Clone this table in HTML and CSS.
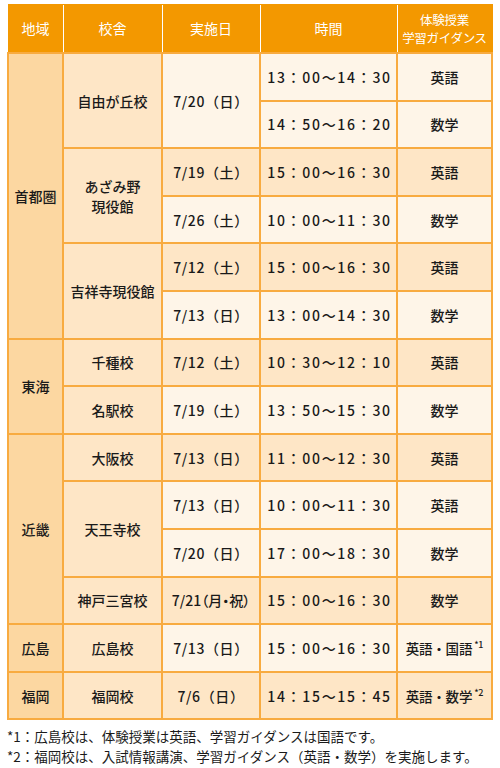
FILE: index.html
```html
<!DOCTYPE html>
<html lang="ja">
<head>
<meta charset="utf-8">
<link rel="stylesheet" href="styles.css">
</head>
<body>
<div class="page">
<table class="schedule">
<colgroup>
<col class="c-region"><col class="c-school"><col class="c-date"><col class="c-time"><col class="c-subj">
</colgroup>
<thead>
<tr><th>地域</th><th>校舎</th><th>実施日</th><th>時間</th><th class="guide"><span class="gl">体験授業</span><span class="gl">学習ガイダンス</span></th></tr>
</thead>
<tbody>
<tr class="light"><td rowspan="6" class="region">首都圏</td><td rowspan="2" class="school">自由が丘校</td><td rowspan="2" class="date">7/20（日）</td><td class="time">13：00～14：30</td><td>英語</td></tr>
<tr class="light"><td class="time">14：50～16：20</td><td>数学</td></tr>
<tr class="mid"><td rowspan="2" class="school">あざみ野<br>現役館</td><td class="date">7/19（土）</td><td class="time">15：00～16：30</td><td>英語</td></tr>
<tr class="light"><td class="date">7/26（土）</td><td class="time">10：00～11：30</td><td>数学</td></tr>
<tr class="mid"><td rowspan="2" class="school">吉祥寺現役館</td><td class="date">7/12（土）</td><td class="time">15：00～16：30</td><td>英語</td></tr>
<tr class="light"><td class="date">7/13（日）</td><td class="time">13：00～14：30</td><td>数学</td></tr>
<tr class="mid"><td rowspan="2" class="region">東海</td><td class="school">千種校</td><td class="date">7/12（土）</td><td class="time">10：30～12：10</td><td>英語</td></tr>
<tr class="light"><td class="school">名駅校</td><td class="date">7/19（土）</td><td class="time">13：50～15：30</td><td>数学</td></tr>
<tr class="mid"><td rowspan="4" class="region">近畿</td><td class="school">大阪校</td><td class="date">7/13（日）</td><td class="time">11：00～12：30</td><td>英語</td></tr>
<tr class="light"><td rowspan="2" class="school">天王寺校</td><td class="date">7/13（日）</td><td class="time">10：00～11：30</td><td>英語</td></tr>
<tr class="light"><td class="date">7/20（日）</td><td class="time">17：00～18：30</td><td>数学</td></tr>
<tr class="mid"><td class="school">神戸三宮校</td><td class="narrow">7/21（月・祝）</td><td class="time">15：00～16：30</td><td>数学</td></tr>
<tr class="light"><td class="region">広島</td><td class="school">広島校</td><td class="date">7/13（日）</td><td class="time">15：00～16：30</td><td class="subj">英語・国語<sup class="mark">*1</sup></td></tr>
<tr class="mid"><td class="region">福岡</td><td class="school">福岡校</td><td class="date">7/6（日）</td><td class="time">14：15～15：45</td><td class="subj">英語・数学<sup class="mark">*2</sup></td></tr>
</tbody>
</table>
<div class="notes">
<p>*1：広島校は、体験授業は英語、学習ガイダンスは国語です。</p>
<p>*2：福岡校は、入試情報講演、学習ガイダンス（英語・数学）を実施します。</p>
</div>
</div>
</body>
</html>
```
FILE: styles.css
```css
html, body {
  margin: 0;
  padding: 0;
  background: #ffffff;
}
body {
  font-family: "Noto Sans CJK JP", "Noto Sans", sans-serif;
  color: #1a1a1a;
}
.page {
  padding: 4px 9px 0 7px;
}
.schedule {
  width: 484px;
  table-layout: fixed;
  border-collapse: collapse;
  font-size: 14px;
  font-weight: 500;
}
.c-region { width: 55px; }
.c-school { width: 99px; }
.c-date { width: 98px; }
.c-time { width: 137px; }
.c-subj { width: 95px; }
.schedule th {
  height: 47px;
  background: #f39800;
  color: #ffffff;
  font-weight: normal;
  font-size: 14px;
  line-height: 17px;
  text-align: center;
  vertical-align: middle;
  padding: 0;
  border-left: 1px solid #ffffff;
  border-top: 1px solid #f39800;
}
.schedule th:first-child {
  border-left: 1px solid #f39800;
}
.schedule th:last-child {
  border-right: 1px solid #f39800;
}
.schedule th.guide {
  font-size: 12.5px;
  line-height: 18px;
  white-space: nowrap;
  letter-spacing: -0.3px;
}
.gl {
  display: block;
}
.schedule td {
  height: 45.6px;
  padding: 0;
  text-align: center;
  vertical-align: middle;
  border: 2px solid #f8ab40;
  line-height: 20px;
  white-space: nowrap;
}
.schedule td.time {
  letter-spacing: 1.7px;
  padding-left: 2px;
}
.schedule td.date {
  letter-spacing: 0.6px;
}
.schedule td.subj {
  font-size: 13.5px;
  letter-spacing: -0.2px;
}
.schedule tr.light td {
  background: #fef5e8;
}
.schedule tr.mid td {
  background: #fee6c6;
}
.schedule tr td.region {
  background: #fcd7a1;
}
.schedule tr td.school {
  background: #fee6c6;
}
.schedule td.narrow {
  font-feature-settings: "palt";
  letter-spacing: 0;
}
.mark {
  font-size: 9px;
  vertical-align: 6px;
  line-height: 0;
  margin-left: 2px;
}
.notes {
  margin-top: 6px;
  font-size: 13.5px;
  line-height: 20px;
}
.notes p {
  margin: 0;
}
```
